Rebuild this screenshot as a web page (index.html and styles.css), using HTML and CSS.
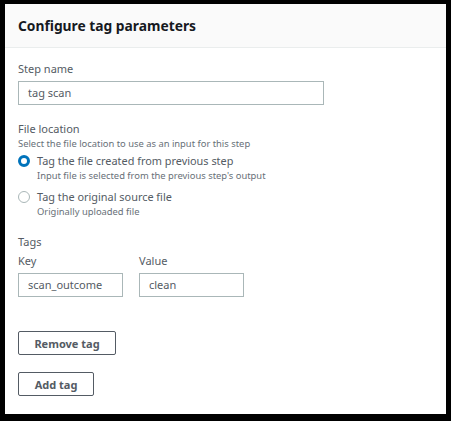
FILE: index.html
```html
<!DOCTYPE html>
<html>
<head>
<meta charset="utf-8">
<link rel="stylesheet" href="styles.css">
</head>
<body>
<div class="card">
  <div class="header"><h2 class="title">Configure tag parameters</h2></div>
  <div class="body">
    <div class="field step">
      <div class="label">Step name</div>
      <div class="input wide">tag scan</div>
    </div>
    <div class="field location">
      <div class="label">File location</div>
      <div class="desc">Select the file location to use as an input for this step</div>
      <div class="radios">
        <div class="radio">
          <span class="dot on"></span>
          <div class="rtext">
            <div class="rlabel">Tag the file created from previous step</div>
            <div class="rdesc">Input file is selected from the previous step's output</div>
          </div>
        </div>
        <div class="radio">
          <span class="dot"></span>
          <div class="rtext">
            <div class="rlabel">Tag the original source file</div>
            <div class="rdesc">Originally uploaded file</div>
          </div>
        </div>
      </div>
    </div>
    <div class="field tags">
      <div class="label">Tags</div>
      <div class="pair">
        <div class="col">
          <div class="label">Key</div>
          <div class="input small">scan_outcome</div>
        </div>
        <div class="col">
          <div class="label">Value</div>
          <div class="input small">clean</div>
        </div>
      </div>
    </div>
    <div class="buttons">
      <button class="btn remove">Remove tag</button>
      <button class="btn add">Add tag</button>
    </div>
  </div>
</div>
</body>
</html>
```
FILE: styles.css
```css
html, body {
  margin: 0;
  padding: 0;
  background: #000;
}
body {
  width: 451px;
  height: 421px;
  overflow: hidden;
  font-family: "Noto Sans", "Open Sans", sans-serif;
  color: #16191f;
}
.card {
  margin: 4px 5px 0 5px;
  width: 441px;
  height: 410px;
  background: #fff;
  box-sizing: border-box;
}
.header {
  height: 44px;
  background: #fafafa;
  border-bottom: 1px solid #eaeded;
  box-sizing: border-box;
  padding-left: 13px;
  display: flex;
  align-items: center;
}
.title {
  margin: 0;
  font-size: 13.8px;
  font-weight: 700;
  line-height: 20px;
  color: #16191f;
}
.body {
  padding: 13px 13px 0 13px;
}
.label {
  font-size: 11px;
  line-height: 16px;
  color: #545b64;
}
.input {
  margin-top: 4px;
  height: 24px;
  box-sizing: border-box;
  border: 1px solid #aab7b8;
  font-size: 11px;
  line-height: 22px;
  padding-left: 9px;
  color: #545b64;
}
.input.wide { width: 306px; }
.input.small { width: 105px; }
.location { margin-top: 16px; }
.desc {
  font-size: 9.4px;
  line-height: 13px;
  color: #687078;
}
.radios {
  margin-top: 3px;
  display: flex;
  flex-direction: column;
  gap: 7px;
}
.radio {
  display: flex;
  align-items: flex-start;
  gap: 7px;
}
.dot {
  margin-top: 2px;
  width: 12px;
  height: 12px;
  border-radius: 50%;
  border: 1px solid #aab7b8;
  box-sizing: border-box;
  flex: none;
}
.dot.on {
  border: 3.5px solid #0073bb;
}
.rlabel {
  font-size: 10.9px;
  line-height: 16px;
  color: #545b64;
}
.rdesc {
  font-size: 9.4px;
  line-height: 13px;
  color: #687078;
}
.tags { margin-top: 16px; }
.pair {
  margin-top: 3px;
  display: flex;
  gap: 16px;
}
.buttons {
  margin-top: 34px;
  display: flex;
  flex-direction: column;
  align-items: flex-start;
  gap: 17px;
}
.btn {
  font-family: "Noto Sans", "Open Sans", sans-serif;
  font-weight: 700;
  font-size: 11px;
  color: #545b64;
  background: #fff;
  border: 1px solid #545b64;
  border-radius: 2px;
  height: 24px;
  padding: 0;
  box-sizing: border-box;
}
.btn.remove { width: 98px; }
.btn.add { width: 76px; }
```
